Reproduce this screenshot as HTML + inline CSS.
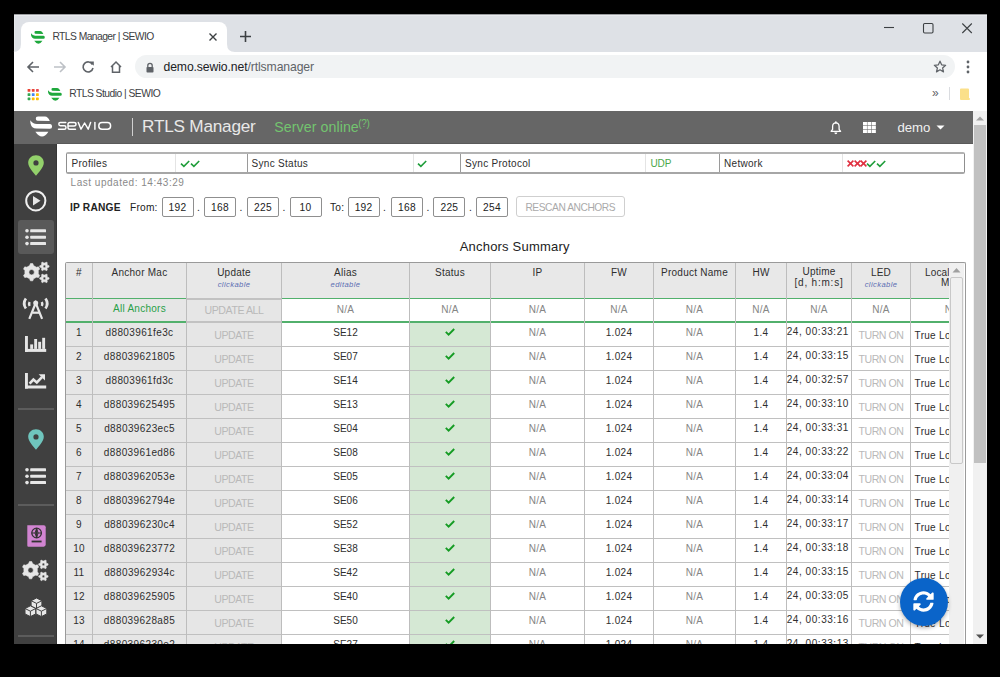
<!DOCTYPE html><html><head><meta charset="utf-8"><style>
html,body{margin:0;padding:0;background:#000;width:1000px;height:677px;overflow:hidden;}
body{position:relative;font-family:'Liberation Sans',sans-serif;}
</style></head><body><div style="position:absolute;left:14px;top:14px;width:973px;height:630px;background:#fff;"></div>
<div style="position:absolute;left:14px;top:14px;width:973px;height:38px;background:#dee1e6;"></div>
<div style="position:absolute;left:14px;top:14px;width:973px;height:1px;background:#9a9c9f;"></div>
<div style="position:absolute;left:14px;top:15px;width:973px;height:1px;background:#e9ebee;"></div>
<div style="position:absolute;left:14px;top:15px;width:1px;height:37px;background:#e6e8eb;"></div>
<div style="position:absolute;left:21px;top:22px;width:206px;height:30px;background:#fff;border-radius:8px 8px 0 0;"></div>
<svg style="position:absolute;left:13px;top:44px" width="8" height="8"><path d="M0 8 Q8 8 8 0 L8 8 Z" fill="#fff"/></svg>
<svg style="position:absolute;left:227px;top:44px" width="8" height="8"><path d="M8 8 Q0 8 0 0 L0 8 Z" fill="#fff"/></svg>
<svg style="position:absolute;left:31px;top:31.2px" width="13.8" height="12.8" viewBox="4.3 4.5 21.8 20" preserveAspectRatio="none"><g fill="#1ea83c"><path d="M9.8 6.7 Q9.6 4.5 12 4.5 L19 4.5 Q22 4.7 23.8 9 L11.5 8.8 Q9.9 8.7 9.8 6.7 Z"/><path d="M4.3 8.2 Q6.5 11.8 11 11.9 L24.2 12.1 Q26.1 12.2 26.1 14.4 Q26.1 16.8 24 16.8 L10.5 16.6 Q5.5 16.3 4.5 11.5 Q4.2 9.5 4.3 8.2 Z"/><path d="M9.4 19.8 L22.4 19.8 Q19.5 24.5 16 24.5 Q12.5 24.5 9.4 19.8 Z"/></g></svg>
<div style="position:absolute;left:52.4px;top:32.04px;font-size:10.3px;line-height:10.3px;color:#3c4043;white-space:nowrap;letter-spacing:-0.55px;">RTLS Manager | SEWIO</div>
<svg style="position:absolute;left:208px;top:32px" width="10" height="10"><path d="M1.5 1.5 L8.5 8.5 M8.5 1.5 L1.5 8.5" stroke="#3c4043" stroke-width="1.4"/></svg>
<svg style="position:absolute;left:239px;top:30px" width="13" height="13"><path d="M6.5 1 L6.5 12 M1 6.5 L12 6.5" stroke="#3c4043" stroke-width="1.6"/></svg>
<svg style="position:absolute;left:880px;top:20px" width="100" height="16"><path d="M4 7.5 L14 7.5" stroke="#3c4043" stroke-width="1.1"/><rect x="43.5" y="3.5" width="9.5" height="9.5" fill="none" stroke="#3c4043" stroke-width="1.1" rx="1.2"/><path d="M82.3 3.5 L91.8 13 M91.8 3.5 L82.3 13" stroke="#3c4043" stroke-width="1.1"/></svg>
<svg style="position:absolute;left:26px;top:60px" width="14" height="14"><path d="M13 7 L2 7 M7 2 L2 7 L7 12" stroke="#5f6368" stroke-width="1.6" fill="none"/></svg>
<svg style="position:absolute;left:53px;top:60px" width="14" height="14"><path d="M1 7 L12 7 M7 2 L12 7 L7 12" stroke="#bdc1c6" stroke-width="1.6" fill="none"/></svg>
<svg style="position:absolute;left:81px;top:60px" width="14" height="14"><path d="M11.5 4.5 A5 5 0 1 0 12 8" stroke="#5f6368" stroke-width="1.6" fill="none"/><path d="M8.5 1.5 L12.8 1.5 L12.8 5.8 Z" fill="#5f6368"/></svg>
<svg style="position:absolute;left:109px;top:60px" width="14" height="14"><path d="M2 7 L7 2 L12 7 M3.5 5.8 L3.5 12.3 L10.5 12.3 L10.5 5.8" stroke="#5f6368" stroke-width="1.5" fill="none"/></svg>
<div style="position:absolute;left:135px;top:55px;width:820px;height:23px;background:#f1f3f4;border-radius:12px;"></div>
<svg style="position:absolute;left:145px;top:62px" width="10" height="11"><path d="M2.8 5 L2.8 3.5 A2.2 2.2 0 0 1 7.2 3.5 L7.2 5" stroke="#5f6368" stroke-width="1.3" fill="none"/><rect x="1.5" y="5" width="7" height="5.5" rx="0.8" fill="#5f6368"/></svg>
<div style="position:absolute;left:163.5px;top:60.83px;font-size:12.2px;line-height:12.2px;color:#202124;white-space:nowrap;letter-spacing:-0.1px;"><span style="color:#202124">demo.sewio.net</span><span style="color:#5f6368">/rtlsmanager</span></div>
<svg style="position:absolute;left:933px;top:60px" width="14" height="13" viewBox="0 0 24 23"><path d="M12 2 L14.9 8.6 L22 9.3 L16.6 14 L18.2 21 L12 17.3 L5.8 21 L7.4 14 L2 9.3 L9.1 8.6 Z" stroke="#5f6368" stroke-width="2.2" fill="none" stroke-linejoin="round"/></svg>
<svg style="position:absolute;left:965px;top:60px" width="6" height="14"><circle cx="3" cy="2" r="1.4" fill="#5f6368"/><circle cx="3" cy="7" r="1.4" fill="#5f6368"/><circle cx="3" cy="12" r="1.4" fill="#5f6368"/></svg>
<svg style="position:absolute;left:27px;top:88px" width="13" height="13"><rect x="0.6" y="1.0" width="2.8" height="2.8" rx="0.6" fill="#ea4335"/><rect x="4.8" y="1.0" width="2.8" height="2.8" rx="0.6" fill="#ea4335"/><rect x="9.0" y="1.0" width="2.8" height="2.8" rx="0.6" fill="#e94c55"/><rect x="0.6" y="5.2" width="2.8" height="2.8" rx="0.6" fill="#34a853"/><rect x="4.8" y="5.2" width="2.8" height="2.8" rx="0.6" fill="#4285f4"/><rect x="9.0" y="5.2" width="2.8" height="2.8" rx="0.6" fill="#fbbc04"/><rect x="0.6" y="9.4" width="2.8" height="2.8" rx="0.6" fill="#34a853"/><rect x="4.8" y="9.4" width="2.8" height="2.8" rx="0.6" fill="#fbbc04"/><rect x="9.0" y="9.4" width="2.8" height="2.8" rx="0.6" fill="#fbbc04"/></svg>
<svg style="position:absolute;left:48.2px;top:88px" width="13.8" height="12.8" viewBox="4.3 4.5 21.8 20" preserveAspectRatio="none"><g fill="#1ea83c"><path d="M9.8 6.7 Q9.6 4.5 12 4.5 L19 4.5 Q22 4.7 23.8 9 L11.5 8.8 Q9.9 8.7 9.8 6.7 Z"/><path d="M4.3 8.2 Q6.5 11.8 11 11.9 L24.2 12.1 Q26.1 12.2 26.1 14.4 Q26.1 16.8 24 16.8 L10.5 16.6 Q5.5 16.3 4.5 11.5 Q4.2 9.5 4.3 8.2 Z"/><path d="M9.4 19.8 L22.4 19.8 Q19.5 24.5 16 24.5 Q12.5 24.5 9.4 19.8 Z"/></g></svg>
<div style="position:absolute;left:69.2px;top:89.25px;font-size:10.3px;line-height:10.3px;color:#3c4043;white-space:nowrap;letter-spacing:-0.52px;">RTLS Studio | SEWIO</div>
<div style="position:absolute;left:932px;top:86.80px;font-size:12px;line-height:12px;color:#5f6368;white-space:nowrap;">»</div>
<div style="position:absolute;left:949px;top:87px;width:1px;height:13px;background:#dadce0;"></div>
<svg style="position:absolute;left:959px;top:88px" width="12" height="13"><path d="M1 1.5 Q1 0.5 2 0.5 L9 0.5 Q10 0.5 10 1.5 L10 10 Q11 10 11 11 Q11 12 10 12 L2 12 Q1 12 1 11 Z" fill="#fbe08a"/></svg>
<div style="position:absolute;left:14px;top:111px;width:959px;height:33px;background:#666;"></div>
<div style="position:absolute;left:57px;top:143px;width:916px;height:1px;background:#5a5a5a;"></div>
<svg style="position:absolute;left:26px;top:112px" width="32" height="28" viewBox="0 0 32 28">
<path d="M9.8 6.7 Q9.6 4.5 12 4.5 L19 4.5 Q22 4.7 23.8 9 L11.5 8.8 Q9.9 8.7 9.8 6.7 Z" fill="#fff"/>
<path d="M4.3 8.2 Q6.5 11.8 11 11.9 L24.2 12.1 Q26.1 12.2 26.1 14.4 Q26.1 16.8 24 16.8 L10.5 16.6 Q5.5 16.3 4.5 11.5 Q4.2 9.5 4.3 8.2 Z" fill="#fff"/>
<path d="M9.4 19.8 L22.4 19.8 Q19.5 24.5 16 24.5 Q12.5 24.5 9.4 19.8 Z" fill="#fff"/>
</svg>
<svg style="position:absolute;left:57px;top:121px" width="55" height="10" viewBox="0 0 55 10">
<g fill="none" stroke="#fff" stroke-width="1.45" stroke-linecap="round" stroke-linejoin="round">
<path d="M8.8 1.5 L3.2 1.5 Q1.8 1.5 1.8 3.1 Q1.8 4.7 3.4 4.7 L7.3 4.7 Q9 4.7 9 6.4 Q9 8.2 7.3 8.2 L1.5 8.2"/>
<path d="M18.5 8.2 L12.8 8.2 Q11 8.2 11 6.4 L11 3.3 Q11 1.5 12.8 1.5 L17 1.5 Q19 1.5 19 3.2 Q19 4.9 17 4.9 L11.3 4.9"/>
<path d="M21.3 1.5 L24 8.2 L27.6 2 L31.2 8.2 L33.6 1.5"/>
<path d="M37.9 1.5 L37.9 8.2"/>
<rect x="41.8" y="1.5" width="11.8" height="6.7" rx="3.2"/>
</g></svg>
<div style="position:absolute;left:131.5px;top:118px;width:1.2px;height:18px;background:#d0d0d0;"></div>
<div style="position:absolute;left:142px;top:117.68px;font-size:17.2px;line-height:17.2px;color:#e8e8e8;white-space:nowrap;letter-spacing:-0.22px;">RTLS Manager</div>
<div style="position:absolute;left:274.2px;top:120.23px;font-size:14.2px;line-height:14.2px;color:#73c46f;white-space:nowrap;letter-spacing:0.08px;">Server online</div>
<div style="position:absolute;left:358.2px;top:118.70px;font-size:10px;line-height:10px;color:#73c46f;white-space:nowrap;letter-spacing:-0.3px;">(?)</div>
<svg style="position:absolute;left:829.5px;top:121px" width="12" height="14" viewBox="0 0 12 14"><path d="M1.1 10.3 L2.6 8.4 L2.6 5.6 Q2.6 2 5.85 1.8 Q9.1 2 9.1 5.6 L9.1 8.4 L10.6 10.3 Z" fill="none" stroke="#fff" stroke-width="1.3" stroke-linejoin="round"/><circle cx="5.85" cy="1.2" r="0.9" fill="#fff"/><path d="M4.3 11.4 L7.4 11.4 Q7.2 13.2 5.85 13.2 Q4.5 13.2 4.3 11.4 Z" fill="#fff"/></svg>
<svg style="position:absolute;left:862.8px;top:121.7px" width="13" height="11.2"><rect x="0.00" y="0.00" width="3.95" height="3.35" fill="#fff"/><rect x="4.45" y="0.00" width="3.95" height="3.35" fill="#fff"/><rect x="8.90" y="0.00" width="3.95" height="3.35" fill="#fff"/><rect x="0.00" y="3.85" width="3.95" height="3.35" fill="#fff"/><rect x="4.45" y="3.85" width="3.95" height="3.35" fill="#fff"/><rect x="8.90" y="3.85" width="3.95" height="3.35" fill="#fff"/><rect x="0.00" y="7.70" width="3.95" height="3.35" fill="#fff"/><rect x="4.45" y="7.70" width="3.95" height="3.35" fill="#fff"/><rect x="8.90" y="7.70" width="3.95" height="3.35" fill="#fff"/></svg>
<div style="position:absolute;left:897.6px;top:120.78px;font-size:13.2px;line-height:13.2px;color:#f0f0f0;white-space:nowrap;letter-spacing:-0.1px;">demo</div>
<svg style="position:absolute;left:936px;top:125px" width="9" height="5"><path d="M0.5 0.5 L8.5 0.5 L4.5 4.5 Z" fill="#fff"/></svg>
<div style="position:absolute;left:973px;top:111px;width:14px;height:533px;background:#f1f1f1;"></div>
<svg style="position:absolute;left:976px;top:116px" width="8" height="5"><path d="M0 4.5 L4 0.5 L8 4.5 Z" fill="#a3a3a3"/></svg>
<div style="position:absolute;left:974px;top:125px;width:12px;height:338px;background:#c1c1c1;"></div>
<svg style="position:absolute;left:976px;top:634px" width="8" height="5"><path d="M0 0.5 L8 0.5 L4 4.5 Z" fill="#505050"/></svg>
<div style="position:absolute;left:14px;top:144px;width:43px;height:500px;background:#404040;"></div>
<div style="position:absolute;left:56px;top:144px;width:1px;height:500px;background:#363636;"></div>
<svg style="position:absolute;left:28px;top:154.5px" width="16" height="21" viewBox="0 0 16 21"><path d="M8 0.2 C3.6 0.2 0.2 3.5 0.2 7.8 C0.2 12.5 5.5 17.5 8 20.8 C10.5 17.5 15.8 12.5 15.8 7.8 C15.8 3.5 12.4 0.2 8 0.2 Z M8 5.3 A2.6 2.6 0 1 0 8 10.5 A2.6 2.6 0 1 0 8 5.3 Z" fill="#93d16b" fill-rule="evenodd"/></svg>
<svg style="position:absolute;left:25px;top:189.5px" width="22" height="22"><circle cx="10.8" cy="10.8" r="9.6" fill="none" stroke="#f0f0f0" stroke-width="2"/><path d="M8 6 L15.5 10.8 L8 15.6 Z" fill="#e6e6e6"/></svg>
<div style="position:absolute;left:17.5px;top:220px;width:36.5px;height:34px;background:#595959;border-radius:3px;"></div>
<svg style="position:absolute;left:25px;top:228.6px" width="22" height="17"><circle cx="2" cy="1.80" r="1.8" fill="#e6e6e6"/><rect x="5.2" y="0.30" width="15.8" height="3" rx="0.6" fill="#e6e6e6"/><circle cx="2" cy="8.20" r="1.8" fill="#e6e6e6"/><rect x="5.2" y="6.70" width="15.8" height="3" rx="0.6" fill="#e6e6e6"/><circle cx="2" cy="14.60" r="1.8" fill="#e6e6e6"/><rect x="5.2" y="13.10" width="15.8" height="3" rx="0.6" fill="#e6e6e6"/></svg>
<svg style="position:absolute;left:22.5px;top:261px" width="28" height="24"><path d="M6.67 4.57 L7.42 2.58 L9.78 2.58 L10.53 4.57 L13.38 6.22 L15.47 5.87 L16.66 7.91 L15.30 9.55 L15.30 12.85 L16.66 14.49 L15.47 16.53 L13.38 16.18 L10.53 17.83 L9.78 19.82 L7.42 19.82 L6.67 17.83 L3.82 16.18 L1.73 16.53 L0.54 14.49 L1.90 12.85 L1.90 9.55 L0.54 7.91 L1.73 5.87 L3.82 6.22 Z M11.30 11.20 A2.7 2.7 0 1 0 5.90 11.20 A2.7 2.7 0 1 0 11.30 11.20 Z M24.75 4.39 L26.05 4.71 L26.05 6.09 L24.75 6.41 L23.95 7.80 L24.32 9.08 L23.13 9.77 L22.20 8.81 L20.60 8.81 L19.67 9.77 L18.48 9.08 L18.85 7.80 L18.05 6.41 L16.75 6.09 L16.75 4.71 L18.05 4.39 L18.85 3.00 L18.48 1.72 L19.67 1.03 L20.60 1.99 L22.20 1.99 L23.13 1.03 L24.32 1.72 L23.95 3.00 Z M22.70 5.40 A1.3 1.3 0 1 0 20.10 5.40 A1.3 1.3 0 1 0 22.70 5.40 Z M24.75 16.39 L26.05 16.71 L26.05 18.09 L24.75 18.41 L23.95 19.80 L24.32 21.08 L23.13 21.77 L22.20 20.81 L20.60 20.81 L19.67 21.77 L18.48 21.08 L18.85 19.80 L18.05 18.41 L16.75 18.09 L16.75 16.71 L18.05 16.39 L18.85 15.00 L18.48 13.72 L19.67 13.03 L20.60 13.99 L22.20 13.99 L23.13 13.03 L24.32 13.72 L23.95 15.00 Z M22.70 17.40 A1.3 1.3 0 1 0 20.10 17.40 A1.3 1.3 0 1 0 22.70 17.40 Z" fill="#e6e6e6" fill-rule="evenodd" stroke="#e6e6e6" stroke-width="0.6" stroke-linejoin="round"/></svg>
<svg style="position:absolute;left:18px;top:294px" width="36" height="30" viewBox="0 0 36 30">
<g fill="none" stroke="#e6e6e6" stroke-linecap="butt">
<path d="M7.9 4.6 Q4.4 9.6 7.9 14.6" stroke-width="2.7"/><path d="M27.5 4.6 Q31 9.6 27.5 14.6" stroke-width="2.7"/>
<path d="M11.6 8 Q10.5 10 11.6 12" stroke-width="2.5"/><path d="M23.8 8 Q24.9 10 23.8 12" stroke-width="2.5"/>
<path d="M11.3 24.8 L17.7 9 L24.1 24.8" stroke-width="2.2"/><path d="M14.3 18.7 L21.1 18.7" stroke-width="2.2"/>
</g><circle cx="17.7" cy="9" r="2.5" fill="#e6e6e6"/></svg>
<svg style="position:absolute;left:25px;top:336px" width="22" height="17">
<rect x="0" y="0" width="2.9" height="16" fill="#e6e6e6"/><rect x="0" y="12.9" width="21.2" height="3" fill="#e6e6e6"/>
<rect x="5.2" y="8.4" width="2.9" height="4.5" fill="#e6e6e6"/><rect x="9.2" y="3" width="2.9" height="9.9" fill="#e6e6e6"/>
<rect x="13.2" y="5.8" width="2.9" height="7.1" fill="#e6e6e6"/><rect x="17.2" y="1.8" width="2.9" height="11.1" fill="#e6e6e6"/>
</svg>
<svg style="position:absolute;left:25px;top:373px" width="22" height="17">
<rect x="0" y="0" width="2.9" height="15.6" fill="#e6e6e6"/><rect x="0" y="12.5" width="21.2" height="3" fill="#e6e6e6"/>
<path d="M4.6 10.6 L8.4 6.6 L11.8 9.4 L17 4.2" fill="none" stroke="#e6e6e6" stroke-width="2.6" stroke-linejoin="miter"/>
<path d="M13.6 1.2 L20 1.2 L20 7.6 Z" fill="#e6e6e6"/>
</svg>
<div style="position:absolute;left:17.5px;top:408px;width:36.5px;height:1.5px;background:#5c5c5c;"></div>
<svg style="position:absolute;left:27.6px;top:429.3px" width="16" height="21" viewBox="0 0 16 21"><path d="M8 0.2 C3.6 0.2 0.2 3.5 0.2 7.8 C0.2 12.5 5.5 17.5 8 20.8 C10.5 17.5 15.8 12.5 15.8 7.8 C15.8 3.5 12.4 0.2 8 0.2 Z M8 5.3 A2.6 2.6 0 1 0 8 10.5 A2.6 2.6 0 1 0 8 5.3 Z" fill="#6fc5bd" fill-rule="evenodd"/></svg>
<svg style="position:absolute;left:25.2px;top:468px" width="22" height="17"><circle cx="2" cy="1.80" r="1.8" fill="#e6e6e6"/><rect x="5.2" y="0.30" width="15.8" height="3" rx="0.6" fill="#e6e6e6"/><circle cx="2" cy="8.20" r="1.8" fill="#e6e6e6"/><rect x="5.2" y="6.70" width="15.8" height="3" rx="0.6" fill="#e6e6e6"/><circle cx="2" cy="14.60" r="1.8" fill="#e6e6e6"/><rect x="5.2" y="13.10" width="15.8" height="3" rx="0.6" fill="#e6e6e6"/></svg>
<div style="position:absolute;left:17.5px;top:504px;width:36.5px;height:1.5px;background:#5c5c5c;"></div>
<svg style="position:absolute;left:26.5px;top:524.5px" width="19" height="22" viewBox="0 0 19 22">
<path d="M0.3 0.3 L16.8 0.3 Q18.7 0.3 18.7 2.2 L18.7 19.6 Q18.7 21.7 16.6 21.7 L1.5 21.7 Q0.3 21.7 0.3 20.5 Z" fill="#d184d1"/>
<circle cx="9.6" cy="8" r="4.8" fill="none" stroke="#333" stroke-width="1.3"/>
<path d="M4.8 8 L14.4 8 M9.6 3.2 L9.6 12.8" fill="none" stroke="#333" stroke-width="1.1"/>
<path d="M9.6 3.2 Q6.6 8 9.6 12.8 Q12.6 8 9.6 3.2" fill="none" stroke="#333" stroke-width="1"/>
<rect x="4.6" y="15.6" width="10" height="1.8" fill="#333"/>
</svg>
<svg style="position:absolute;left:22px;top:559px" width="28" height="24"><path d="M6.67 4.57 L7.42 2.58 L9.78 2.58 L10.53 4.57 L13.38 6.22 L15.47 5.87 L16.66 7.91 L15.30 9.55 L15.30 12.85 L16.66 14.49 L15.47 16.53 L13.38 16.18 L10.53 17.83 L9.78 19.82 L7.42 19.82 L6.67 17.83 L3.82 16.18 L1.73 16.53 L0.54 14.49 L1.90 12.85 L1.90 9.55 L0.54 7.91 L1.73 5.87 L3.82 6.22 Z M11.30 11.20 A2.7 2.7 0 1 0 5.90 11.20 A2.7 2.7 0 1 0 11.30 11.20 Z M24.75 4.39 L26.05 4.71 L26.05 6.09 L24.75 6.41 L23.95 7.80 L24.32 9.08 L23.13 9.77 L22.20 8.81 L20.60 8.81 L19.67 9.77 L18.48 9.08 L18.85 7.80 L18.05 6.41 L16.75 6.09 L16.75 4.71 L18.05 4.39 L18.85 3.00 L18.48 1.72 L19.67 1.03 L20.60 1.99 L22.20 1.99 L23.13 1.03 L24.32 1.72 L23.95 3.00 Z M22.70 5.40 A1.3 1.3 0 1 0 20.10 5.40 A1.3 1.3 0 1 0 22.70 5.40 Z M24.75 16.39 L26.05 16.71 L26.05 18.09 L24.75 18.41 L23.95 19.80 L24.32 21.08 L23.13 21.77 L22.20 20.81 L20.60 20.81 L19.67 21.77 L18.48 21.08 L18.85 19.80 L18.05 18.41 L16.75 18.09 L16.75 16.71 L18.05 16.39 L18.85 15.00 L18.48 13.72 L19.67 13.03 L20.60 13.99 L22.20 13.99 L23.13 13.03 L24.32 13.72 L23.95 15.00 Z M22.70 17.40 A1.3 1.3 0 1 0 20.10 17.40 A1.3 1.3 0 1 0 22.70 17.40 Z" fill="#e6e6e6" fill-rule="evenodd" stroke="#e6e6e6" stroke-width="0.6" stroke-linejoin="round"/></svg>
<svg style="position:absolute;left:24px;top:597px" width="24" height="21" viewBox="0 0 24 21"><path d="M12.5 1.0 L17.9 3.7 L17.9 9.100000000000001 L12.5 11.8 L7.1 9.100000000000001 L7.1 3.7 Z" fill="#e6e6e6" stroke="#404040" stroke-width="1"/><path d="M7.1 3.7 L12.5 6.4 L17.9 3.7 M12.5 6.4 L12.5 11.8" fill="none" stroke="#404040" stroke-width="1"/><path d="M6.4 8.8 L11.8 11.5 L11.8 16.900000000000002 L6.4 19.6 L1.0 16.900000000000002 L1.0 11.5 Z" fill="#e6e6e6" stroke="#404040" stroke-width="1"/><path d="M1.0 11.5 L6.4 14.200000000000001 L11.8 11.5 M6.4 14.200000000000001 L6.4 19.6" fill="none" stroke="#404040" stroke-width="1"/><path d="M17.4 8.8 L22.799999999999997 11.5 L22.799999999999997 16.900000000000002 L17.4 19.6 L11.999999999999998 16.900000000000002 L11.999999999999998 11.5 Z" fill="#e6e6e6" stroke="#404040" stroke-width="1"/><path d="M11.999999999999998 11.5 L17.4 14.200000000000001 L22.799999999999997 11.5 M17.4 14.200000000000001 L17.4 19.6" fill="none" stroke="#404040" stroke-width="1"/></svg>
<div style="position:absolute;left:17.5px;top:635px;width:36.5px;height:1.5px;background:#5c5c5c;"></div>
<div style="position:absolute;left:66px;top:152px;width:897px;height:18px;border:1px solid #8f8f8f;border-top:2px solid #b3b3b3;border-bottom:2px solid #a6a6a6;border-radius:2px;"></div>
<div style="position:absolute;left:175px;top:154px;width:1px;height:18px;background:#e4e4e4;"></div>
<div style="position:absolute;left:413px;top:154px;width:1px;height:18px;background:#e4e4e4;"></div>
<div style="position:absolute;left:645px;top:154px;width:1px;height:18px;background:#e4e4e4;"></div>
<div style="position:absolute;left:842px;top:154px;width:1px;height:18px;background:#e4e4e4;"></div>
<div style="position:absolute;left:247px;top:154px;width:1px;height:18px;background:#9a9a9a;"></div>
<div style="position:absolute;left:460px;top:154px;width:1px;height:18px;background:#9a9a9a;"></div>
<div style="position:absolute;left:719px;top:154px;width:1px;height:18px;background:#9a9a9a;"></div>
<div style="position:absolute;left:71.5px;top:158.90px;font-size:10px;line-height:10px;color:#2e2e2e;white-space:nowrap;letter-spacing:0.3px;">Profiles</div>
<div style="position:absolute;left:251.5px;top:158.90px;font-size:10px;line-height:10px;color:#2e2e2e;white-space:nowrap;letter-spacing:0.3px;">Sync Status</div>
<div style="position:absolute;left:465px;top:158.90px;font-size:10px;line-height:10px;color:#2e2e2e;white-space:nowrap;letter-spacing:0.3px;">Sync Protocol</div>
<div style="position:absolute;left:724px;top:158.90px;font-size:10px;line-height:10px;color:#2e2e2e;white-space:nowrap;letter-spacing:0.3px;">Network</div>
<div style="position:absolute;left:650.4px;top:158.90px;font-size:10px;line-height:10px;color:#4aa84a;white-space:nowrap;letter-spacing:0px;">UDP</div>
<svg style="position:absolute;left:180px;top:159.5px" width="10" height="8" viewBox="0 0 10 8"><path d="M1 3.6 L3.9 6.3 L9.2 1" fill="none" stroke="#1f9d3a" stroke-width="1.6"/></svg>
<svg style="position:absolute;left:189.5px;top:159.5px" width="10" height="8" viewBox="0 0 10 8"><path d="M1 3.6 L3.9 6.3 L9.2 1" fill="none" stroke="#1f9d3a" stroke-width="1.6"/></svg>
<svg style="position:absolute;left:417px;top:159.5px" width="10" height="8" viewBox="0 0 10 8"><path d="M1 3.6 L3.9 6.3 L9.2 1" fill="none" stroke="#1f9d3a" stroke-width="1.6"/></svg>
<svg style="position:absolute;left:847px;top:160px" width="7" height="7"><path d="M0.6 0.6 L6.4 6.4 M6.4 0.6 L0.6 6.4" stroke="#e03040" stroke-width="1.6"/></svg>
<svg style="position:absolute;left:853.5px;top:160px" width="7" height="7"><path d="M0.6 0.6 L6.4 6.4 M6.4 0.6 L0.6 6.4" stroke="#e03040" stroke-width="1.6"/></svg>
<svg style="position:absolute;left:860px;top:160px" width="7" height="7"><path d="M0.6 0.6 L6.4 6.4 M6.4 0.6 L0.6 6.4" stroke="#e03040" stroke-width="1.6"/></svg>
<svg style="position:absolute;left:866px;top:159.5px" width="10" height="8" viewBox="0 0 10 8"><path d="M1 3.6 L3.9 6.3 L9.2 1" fill="none" stroke="#1f9d3a" stroke-width="1.6"/></svg>
<svg style="position:absolute;left:875.5px;top:159.5px" width="10" height="8" viewBox="0 0 10 8"><path d="M1 3.6 L3.9 6.3 L9.2 1" fill="none" stroke="#1f9d3a" stroke-width="1.6"/></svg>
<div style="position:absolute;left:70.6px;top:178.10px;font-size:10px;line-height:10px;color:#8a8a8a;white-space:nowrap;letter-spacing:0.52px;">Last updated: 14:43:29</div>
<div style="position:absolute;left:70px;top:203.33px;font-size:10.2px;line-height:10.2px;color:#222;white-space:nowrap;font-weight:bold;letter-spacing:0.2px;">IP RANGE</div>
<div style="position:absolute;left:130px;top:203.33px;font-size:10.2px;line-height:10.2px;color:#222;white-space:nowrap;letter-spacing:0.2px;">From:</div>
<div style="position:absolute;left:330px;top:203.33px;font-size:10.2px;line-height:10.2px;color:#222;white-space:nowrap;letter-spacing:0.2px;">To:</div>
<div style="position:absolute;left:161.5px;top:197px;width:30px;height:18px;border:1px solid #8f8f8f;border-radius:2px;"></div>
<div style="position:absolute;left:161.50px;top:203.33px;width:32px;text-align:center;font-size:10.2px;line-height:10.2px;color:#222;white-space:nowrap;letter-spacing:0.3px;">192</div>
<div style="position:absolute;left:197.0px;top:203.33px;font-size:10.2px;line-height:10.2px;color:#222;white-space:nowrap;">.</div>
<div style="position:absolute;left:204px;top:197px;width:30px;height:18px;border:1px solid #8f8f8f;border-radius:2px;"></div>
<div style="position:absolute;left:204.00px;top:203.33px;width:32px;text-align:center;font-size:10.2px;line-height:10.2px;color:#222;white-space:nowrap;letter-spacing:0.3px;">168</div>
<div style="position:absolute;left:239.5px;top:203.33px;font-size:10.2px;line-height:10.2px;color:#222;white-space:nowrap;">.</div>
<div style="position:absolute;left:247px;top:197px;width:30px;height:18px;border:1px solid #8f8f8f;border-radius:2px;"></div>
<div style="position:absolute;left:247.00px;top:203.33px;width:32px;text-align:center;font-size:10.2px;line-height:10.2px;color:#222;white-space:nowrap;letter-spacing:0.3px;">225</div>
<div style="position:absolute;left:282.5px;top:203.33px;font-size:10.2px;line-height:10.2px;color:#222;white-space:nowrap;">.</div>
<div style="position:absolute;left:289.5px;top:197px;width:30px;height:18px;border:1px solid #8f8f8f;border-radius:2px;"></div>
<div style="position:absolute;left:289.50px;top:203.33px;width:32px;text-align:center;font-size:10.2px;line-height:10.2px;color:#222;white-space:nowrap;letter-spacing:0.3px;">10</div>
<div style="position:absolute;left:347.6px;top:197px;width:30px;height:18px;border:1px solid #8f8f8f;border-radius:2px;"></div>
<div style="position:absolute;left:347.60px;top:203.33px;width:32px;text-align:center;font-size:10.2px;line-height:10.2px;color:#222;white-space:nowrap;letter-spacing:0.3px;">192</div>
<div style="position:absolute;left:383.1px;top:203.33px;font-size:10.2px;line-height:10.2px;color:#222;white-space:nowrap;">.</div>
<div style="position:absolute;left:391px;top:197px;width:30px;height:18px;border:1px solid #8f8f8f;border-radius:2px;"></div>
<div style="position:absolute;left:391.00px;top:203.33px;width:32px;text-align:center;font-size:10.2px;line-height:10.2px;color:#222;white-space:nowrap;letter-spacing:0.3px;">168</div>
<div style="position:absolute;left:426.5px;top:203.33px;font-size:10.2px;line-height:10.2px;color:#222;white-space:nowrap;">.</div>
<div style="position:absolute;left:433.4px;top:197px;width:30px;height:18px;border:1px solid #8f8f8f;border-radius:2px;"></div>
<div style="position:absolute;left:433.40px;top:203.33px;width:32px;text-align:center;font-size:10.2px;line-height:10.2px;color:#222;white-space:nowrap;letter-spacing:0.3px;">225</div>
<div style="position:absolute;left:468.9px;top:203.33px;font-size:10.2px;line-height:10.2px;color:#222;white-space:nowrap;">.</div>
<div style="position:absolute;left:476px;top:197px;width:30px;height:18px;border:1px solid #8f8f8f;border-radius:2px;"></div>
<div style="position:absolute;left:476.00px;top:203.33px;width:32px;text-align:center;font-size:10.2px;line-height:10.2px;color:#222;white-space:nowrap;letter-spacing:0.3px;">254</div>
<div style="position:absolute;left:516px;top:196px;width:107px;height:19px;border:1px solid #cfcfcf;border-radius:3px;"></div>
<div style="position:absolute;left:515.30px;top:202.83px;width:110px;text-align:center;font-size:10.2px;line-height:10.2px;color:#aaa;white-space:nowrap;letter-spacing:-0.42px;">RESCAN ANCHORS</div>
<div style="position:absolute;left:449.70px;top:239.75px;width:130px;text-align:center;font-size:13px;line-height:13px;color:#222;white-space:nowrap;letter-spacing:0.2px;">Anchors Summary</div>
<div style="position:absolute;left:65px;top:262px;width:899px;height:381px;border:1px solid #9a9a9a;border-bottom:none;border-radius:2px 2px 0 0;"></div>
<div style="position:absolute;left:66px;top:263px;width:883px;height:381px;overflow:hidden;">
<div style="position:absolute;left:0px;top:0px;width:883px;height:35px;background:#e8e8e8;"></div>
<div style="position:absolute;left:0px;top:36px;width:883px;height:22px;background:#fff;"></div>
<div style="position:absolute;left:0px;top:36px;width:215px;height:22px;background:#e6e6e6;"></div>
<div style="position:absolute;left:0px;top:59px;width:215px;height:24px;background:#e6e6e6;"></div>
<div style="position:absolute;left:344px;top:60px;width:80px;height:24px;background:#d5e8d4;"></div>
<div style="position:absolute;left:0px;top:83px;width:215px;height:24px;background:#e6e6e6;"></div>
<div style="position:absolute;left:344px;top:84px;width:80px;height:24px;background:#d5e8d4;"></div>
<div style="position:absolute;left:0px;top:107px;width:215px;height:24px;background:#e6e6e6;"></div>
<div style="position:absolute;left:344px;top:108px;width:80px;height:24px;background:#d5e8d4;"></div>
<div style="position:absolute;left:0px;top:131px;width:215px;height:24px;background:#e6e6e6;"></div>
<div style="position:absolute;left:344px;top:132px;width:80px;height:24px;background:#d5e8d4;"></div>
<div style="position:absolute;left:0px;top:155px;width:215px;height:24px;background:#e6e6e6;"></div>
<div style="position:absolute;left:344px;top:156px;width:80px;height:24px;background:#d5e8d4;"></div>
<div style="position:absolute;left:0px;top:179px;width:215px;height:24px;background:#e6e6e6;"></div>
<div style="position:absolute;left:344px;top:180px;width:80px;height:24px;background:#d5e8d4;"></div>
<div style="position:absolute;left:0px;top:203px;width:215px;height:24px;background:#e6e6e6;"></div>
<div style="position:absolute;left:344px;top:204px;width:80px;height:24px;background:#d5e8d4;"></div>
<div style="position:absolute;left:0px;top:227px;width:215px;height:24px;background:#e6e6e6;"></div>
<div style="position:absolute;left:344px;top:228px;width:80px;height:24px;background:#d5e8d4;"></div>
<div style="position:absolute;left:0px;top:251px;width:215px;height:24px;background:#e6e6e6;"></div>
<div style="position:absolute;left:344px;top:252px;width:80px;height:24px;background:#d5e8d4;"></div>
<div style="position:absolute;left:0px;top:275px;width:215px;height:24px;background:#e6e6e6;"></div>
<div style="position:absolute;left:344px;top:276px;width:80px;height:24px;background:#d5e8d4;"></div>
<div style="position:absolute;left:0px;top:299px;width:215px;height:24px;background:#e6e6e6;"></div>
<div style="position:absolute;left:344px;top:300px;width:80px;height:24px;background:#d5e8d4;"></div>
<div style="position:absolute;left:0px;top:323px;width:215px;height:24px;background:#e6e6e6;"></div>
<div style="position:absolute;left:344px;top:324px;width:80px;height:24px;background:#d5e8d4;"></div>
<div style="position:absolute;left:0px;top:347px;width:215px;height:24px;background:#e6e6e6;"></div>
<div style="position:absolute;left:344px;top:348px;width:80px;height:24px;background:#d5e8d4;"></div>
<div style="position:absolute;left:0px;top:371px;width:215px;height:24px;background:#e6e6e6;"></div>
<div style="position:absolute;left:344px;top:372px;width:80px;height:24px;background:#d5e8d4;"></div>
<div style="position:absolute;left:0px;top:83px;width:883px;height:1px;background:#c0c0c0;"></div>
<div style="position:absolute;left:121px;top:82.5px;width:94px;height:1.6px;background:#c0c0c0;"></div>
<div style="position:absolute;left:0px;top:107px;width:883px;height:1px;background:#c0c0c0;"></div>
<div style="position:absolute;left:121px;top:106.5px;width:94px;height:1.6px;background:#c0c0c0;"></div>
<div style="position:absolute;left:0px;top:131px;width:883px;height:1px;background:#c0c0c0;"></div>
<div style="position:absolute;left:121px;top:130.5px;width:94px;height:1.6px;background:#c0c0c0;"></div>
<div style="position:absolute;left:0px;top:155px;width:883px;height:1px;background:#c0c0c0;"></div>
<div style="position:absolute;left:121px;top:154.5px;width:94px;height:1.6px;background:#c0c0c0;"></div>
<div style="position:absolute;left:0px;top:179px;width:883px;height:1px;background:#c0c0c0;"></div>
<div style="position:absolute;left:121px;top:178.5px;width:94px;height:1.6px;background:#c0c0c0;"></div>
<div style="position:absolute;left:0px;top:203px;width:883px;height:1px;background:#c0c0c0;"></div>
<div style="position:absolute;left:121px;top:202.5px;width:94px;height:1.6px;background:#c0c0c0;"></div>
<div style="position:absolute;left:0px;top:227px;width:883px;height:1px;background:#c0c0c0;"></div>
<div style="position:absolute;left:121px;top:226.5px;width:94px;height:1.6px;background:#c0c0c0;"></div>
<div style="position:absolute;left:0px;top:251px;width:883px;height:1px;background:#c0c0c0;"></div>
<div style="position:absolute;left:121px;top:250.5px;width:94px;height:1.6px;background:#c0c0c0;"></div>
<div style="position:absolute;left:0px;top:275px;width:883px;height:1px;background:#c0c0c0;"></div>
<div style="position:absolute;left:121px;top:274.5px;width:94px;height:1.6px;background:#c0c0c0;"></div>
<div style="position:absolute;left:0px;top:299px;width:883px;height:1px;background:#c0c0c0;"></div>
<div style="position:absolute;left:121px;top:298.5px;width:94px;height:1.6px;background:#c0c0c0;"></div>
<div style="position:absolute;left:0px;top:323px;width:883px;height:1px;background:#c0c0c0;"></div>
<div style="position:absolute;left:121px;top:322.5px;width:94px;height:1.6px;background:#c0c0c0;"></div>
<div style="position:absolute;left:0px;top:347px;width:883px;height:1px;background:#c0c0c0;"></div>
<div style="position:absolute;left:121px;top:346.5px;width:94px;height:1.6px;background:#c0c0c0;"></div>
<div style="position:absolute;left:0px;top:371px;width:883px;height:1px;background:#c0c0c0;"></div>
<div style="position:absolute;left:121px;top:370.5px;width:94px;height:1.6px;background:#c0c0c0;"></div>
<div style="position:absolute;left:0px;top:395px;width:883px;height:1px;background:#c0c0c0;"></div>
<div style="position:absolute;left:121px;top:394.5px;width:94px;height:1.6px;background:#c0c0c0;"></div>
<div style="position:absolute;left:0px;top:35px;width:883px;height:1.3px;background:#52b06c;"></div>
<div style="position:absolute;left:0px;top:58px;width:883px;height:1.6px;background:#52b06c;"></div>
<div style="position:absolute;left:121px;top:35px;width:94px;height:2px;background:#c2c2c2;"></div>
<div style="position:absolute;left:121px;top:57.5px;width:94px;height:2px;background:#c2c2c2;"></div>
<div style="position:absolute;left:26px;top:0px;width:1px;height:381px;background:#bdbdbd;"></div>
<div style="position:absolute;left:120px;top:0px;width:1px;height:381px;background:#bdbdbd;"></div>
<div style="position:absolute;left:215px;top:0px;width:1px;height:381px;background:#bdbdbd;"></div>
<div style="position:absolute;left:343px;top:0px;width:1px;height:381px;background:#bdbdbd;"></div>
<div style="position:absolute;left:424px;top:0px;width:1px;height:381px;background:#bdbdbd;"></div>
<div style="position:absolute;left:518px;top:0px;width:1px;height:381px;background:#bdbdbd;"></div>
<div style="position:absolute;left:587px;top:0px;width:1px;height:381px;background:#bdbdbd;"></div>
<div style="position:absolute;left:669px;top:0px;width:1px;height:381px;background:#bdbdbd;"></div>
<div style="position:absolute;left:720px;top:0px;width:1px;height:381px;background:#bdbdbd;"></div>
<div style="position:absolute;left:785px;top:0px;width:1px;height:381px;background:#bdbdbd;"></div>
<div style="position:absolute;left:844px;top:0px;width:1px;height:381px;background:#bdbdbd;"></div>
<div style="position:absolute;left:-32.00px;top:4.80px;width:90px;text-align:center;font-size:10px;line-height:10px;color:#2e2e2e;white-space:nowrap;letter-spacing:0.25px;">#</div>
<div style="position:absolute;left:28.50px;top:4.80px;width:90px;text-align:center;font-size:10px;line-height:10px;color:#2e2e2e;white-space:nowrap;letter-spacing:0.25px;">Anchor Mac</div>
<div style="position:absolute;left:123.00px;top:4.80px;width:90px;text-align:center;font-size:10px;line-height:10px;color:#2e2e2e;white-space:nowrap;letter-spacing:0.25px;">Update</div>
<div style="position:absolute;left:234.50px;top:4.80px;width:90px;text-align:center;font-size:10px;line-height:10px;color:#2e2e2e;white-space:nowrap;letter-spacing:0.25px;">Alias</div>
<div style="position:absolute;left:339.00px;top:4.80px;width:90px;text-align:center;font-size:10px;line-height:10px;color:#2e2e2e;white-space:nowrap;letter-spacing:0.25px;">Status</div>
<div style="position:absolute;left:426.50px;top:4.80px;width:90px;text-align:center;font-size:10px;line-height:10px;color:#2e2e2e;white-space:nowrap;letter-spacing:0.25px;">IP</div>
<div style="position:absolute;left:508.00px;top:4.80px;width:90px;text-align:center;font-size:10px;line-height:10px;color:#2e2e2e;white-space:nowrap;letter-spacing:0.25px;">FW</div>
<div style="position:absolute;left:583.50px;top:4.80px;width:90px;text-align:center;font-size:10px;line-height:10px;color:#2e2e2e;white-space:nowrap;letter-spacing:0.25px;">Product Name</div>
<div style="position:absolute;left:650.00px;top:4.80px;width:90px;text-align:center;font-size:10px;line-height:10px;color:#2e2e2e;white-space:nowrap;letter-spacing:0.25px;">HW</div>
<div style="position:absolute;left:708.00px;top:4.10px;width:90px;text-align:center;font-size:10px;line-height:10px;color:#2e2e2e;white-space:nowrap;letter-spacing:0.25px;">Uptime</div>
<div style="position:absolute;left:770.00px;top:4.80px;width:90px;text-align:center;font-size:10px;line-height:10px;color:#2e2e2e;white-space:nowrap;letter-spacing:0.25px;">LED</div>
<div style="position:absolute;left:123.00px;top:18.14px;width:90px;text-align:center;font-size:7.6px;line-height:7.6px;color:#5b6db3;white-space:nowrap;font-style:italic;letter-spacing:0.4px;">clickable</div>
<div style="position:absolute;left:234.50px;top:18.14px;width:90px;text-align:center;font-size:7.6px;line-height:7.6px;color:#5b6db3;white-space:nowrap;font-style:italic;letter-spacing:0.4px;">editable</div>
<div style="position:absolute;left:770.00px;top:18.14px;width:90px;text-align:center;font-size:7.6px;line-height:7.6px;color:#5b6db3;white-space:nowrap;font-style:italic;letter-spacing:0.4px;">clickable</div>
<div style="position:absolute;left:708.00px;top:15.30px;width:90px;text-align:center;font-size:10px;line-height:10px;color:#2e2e2e;white-space:nowrap;letter-spacing:0.8px;">[d, h:m:s]</div>
<div style="position:absolute;left:823.50px;top:4.80px;width:60px;text-align:right;font-size:10px;line-height:10px;color:#2e2e2e;white-space:nowrap;letter-spacing:0.1px;">Local</div>
<div style="position:absolute;left:875px;top:15.30px;font-size:10px;line-height:10px;color:#2e2e2e;white-space:nowrap;letter-spacing:0.25px;">M</div>
<div style="position:absolute;left:28.50px;top:41.00px;width:90px;text-align:center;font-size:10px;line-height:10px;color:#28a048;white-space:nowrap;letter-spacing:0.25px;">All Anchors</div>
<div style="position:absolute;left:123.00px;top:42.39px;width:90px;text-align:center;font-size:10.6px;line-height:10.6px;color:#b9b9b9;white-space:nowrap;letter-spacing:-0.45px;">UPDATE ALL</div>
<div style="position:absolute;left:234.50px;top:41.70px;width:90px;text-align:center;font-size:10px;line-height:10px;color:#858585;white-space:nowrap;letter-spacing:0.3px;">N/A</div>
<div style="position:absolute;left:339.00px;top:41.70px;width:90px;text-align:center;font-size:10px;line-height:10px;color:#858585;white-space:nowrap;letter-spacing:0.3px;">N/A</div>
<div style="position:absolute;left:426.50px;top:41.70px;width:90px;text-align:center;font-size:10px;line-height:10px;color:#858585;white-space:nowrap;letter-spacing:0.3px;">N/A</div>
<div style="position:absolute;left:508.00px;top:41.70px;width:90px;text-align:center;font-size:10px;line-height:10px;color:#858585;white-space:nowrap;letter-spacing:0.3px;">N/A</div>
<div style="position:absolute;left:583.50px;top:41.70px;width:90px;text-align:center;font-size:10px;line-height:10px;color:#858585;white-space:nowrap;letter-spacing:0.3px;">N/A</div>
<div style="position:absolute;left:650.00px;top:41.70px;width:90px;text-align:center;font-size:10px;line-height:10px;color:#858585;white-space:nowrap;letter-spacing:0.3px;">N/A</div>
<div style="position:absolute;left:708.00px;top:41.70px;width:90px;text-align:center;font-size:10px;line-height:10px;color:#858585;white-space:nowrap;letter-spacing:0.3px;">N/A</div>
<div style="position:absolute;left:770.00px;top:41.70px;width:90px;text-align:center;font-size:10px;line-height:10px;color:#858585;white-space:nowrap;letter-spacing:0.3px;">N/A</div>
<div style="position:absolute;left:878.8px;top:41.70px;font-size:10px;line-height:10px;color:#858585;white-space:nowrap;">N</div>
<div style="position:absolute;left:-2.00px;top:64.50px;width:30px;text-align:center;font-size:10px;line-height:10px;color:#2e2e2e;white-space:nowrap;letter-spacing:0.25px;">1</div>
<div style="position:absolute;left:26.50px;top:64.50px;width:94px;text-align:center;font-size:10px;line-height:10px;color:#2e2e2e;white-space:nowrap;letter-spacing:0.38px;">d8803961fe3c</div>
<div style="position:absolute;left:121.00px;top:67.19px;width:94px;text-align:center;font-size:10.6px;line-height:10.6px;color:#b9b9b9;white-space:nowrap;letter-spacing:-0.45px;">UPDATE</div>
<div style="position:absolute;left:232.50px;top:64.50px;width:94px;text-align:center;font-size:10px;line-height:10px;color:#2e2e2e;white-space:nowrap;letter-spacing:0.05px;">SE12</div>
<svg style="position:absolute;left:379px;top:64.60000000000002px" width="10" height="8" viewBox="0 0 10 8"><path d="M0.8 3.8 L3.6 6.6 L9.2 1" fill="none" stroke="#169c24" stroke-width="1.9"/></svg>
<div style="position:absolute;left:426.50px;top:64.50px;width:90px;text-align:center;font-size:10px;line-height:10px;color:#858585;white-space:nowrap;letter-spacing:0.3px;">N/A</div>
<div style="position:absolute;left:508.00px;top:64.50px;width:90px;text-align:center;font-size:10px;line-height:10px;color:#2e2e2e;white-space:nowrap;letter-spacing:0.3px;">1.024</div>
<div style="position:absolute;left:583.50px;top:64.50px;width:90px;text-align:center;font-size:10px;line-height:10px;color:#858585;white-space:nowrap;letter-spacing:0.3px;">N/A</div>
<div style="position:absolute;left:650.00px;top:64.50px;width:90px;text-align:center;font-size:10px;line-height:10px;color:#2e2e2e;white-space:nowrap;letter-spacing:0.3px;">1.4</div>
<div style="position:absolute;left:721px;top:59px;width:64px;height:24px;overflow:hidden;">
<div style="position:absolute;left:-0.3px;top:5.00px;font-size:10px;line-height:10px;color:#2e2e2e;white-space:nowrap;letter-spacing:0.55px;">24, 00:33:21</div>
</div>
<div style="position:absolute;left:770.00px;top:66.99px;width:90px;text-align:center;font-size:10.6px;line-height:10.6px;color:#b9b9b9;white-space:nowrap;letter-spacing:-0.45px;">TURN ON</div>
<div style="position:absolute;left:848.6px;top:67.50px;font-size:10px;line-height:10px;color:#2e2e2e;white-space:nowrap;letter-spacing:0.3px;">True Lo</div>
<div style="position:absolute;left:-2.00px;top:88.50px;width:30px;text-align:center;font-size:10px;line-height:10px;color:#2e2e2e;white-space:nowrap;letter-spacing:0.25px;">2</div>
<div style="position:absolute;left:26.50px;top:88.50px;width:94px;text-align:center;font-size:10px;line-height:10px;color:#2e2e2e;white-space:nowrap;letter-spacing:0.38px;">d88039621805</div>
<div style="position:absolute;left:121.00px;top:91.19px;width:94px;text-align:center;font-size:10.6px;line-height:10.6px;color:#b9b9b9;white-space:nowrap;letter-spacing:-0.45px;">UPDATE</div>
<div style="position:absolute;left:232.50px;top:88.50px;width:94px;text-align:center;font-size:10px;line-height:10px;color:#2e2e2e;white-space:nowrap;letter-spacing:0.05px;">SE07</div>
<svg style="position:absolute;left:379px;top:88.60000000000002px" width="10" height="8" viewBox="0 0 10 8"><path d="M0.8 3.8 L3.6 6.6 L9.2 1" fill="none" stroke="#169c24" stroke-width="1.9"/></svg>
<div style="position:absolute;left:426.50px;top:88.50px;width:90px;text-align:center;font-size:10px;line-height:10px;color:#858585;white-space:nowrap;letter-spacing:0.3px;">N/A</div>
<div style="position:absolute;left:508.00px;top:88.50px;width:90px;text-align:center;font-size:10px;line-height:10px;color:#2e2e2e;white-space:nowrap;letter-spacing:0.3px;">1.024</div>
<div style="position:absolute;left:583.50px;top:88.50px;width:90px;text-align:center;font-size:10px;line-height:10px;color:#858585;white-space:nowrap;letter-spacing:0.3px;">N/A</div>
<div style="position:absolute;left:650.00px;top:88.50px;width:90px;text-align:center;font-size:10px;line-height:10px;color:#2e2e2e;white-space:nowrap;letter-spacing:0.3px;">1.4</div>
<div style="position:absolute;left:721px;top:83px;width:64px;height:24px;overflow:hidden;">
<div style="position:absolute;left:-0.3px;top:5.00px;font-size:10px;line-height:10px;color:#2e2e2e;white-space:nowrap;letter-spacing:0.55px;">24, 00:33:15</div>
</div>
<div style="position:absolute;left:770.00px;top:90.99px;width:90px;text-align:center;font-size:10.6px;line-height:10.6px;color:#b9b9b9;white-space:nowrap;letter-spacing:-0.45px;">TURN ON</div>
<div style="position:absolute;left:848.6px;top:91.50px;font-size:10px;line-height:10px;color:#2e2e2e;white-space:nowrap;letter-spacing:0.3px;">True Lo</div>
<div style="position:absolute;left:-2.00px;top:112.50px;width:30px;text-align:center;font-size:10px;line-height:10px;color:#2e2e2e;white-space:nowrap;letter-spacing:0.25px;">3</div>
<div style="position:absolute;left:26.50px;top:112.50px;width:94px;text-align:center;font-size:10px;line-height:10px;color:#2e2e2e;white-space:nowrap;letter-spacing:0.38px;">d8803961fd3c</div>
<div style="position:absolute;left:121.00px;top:115.19px;width:94px;text-align:center;font-size:10.6px;line-height:10.6px;color:#b9b9b9;white-space:nowrap;letter-spacing:-0.45px;">UPDATE</div>
<div style="position:absolute;left:232.50px;top:112.50px;width:94px;text-align:center;font-size:10px;line-height:10px;color:#2e2e2e;white-space:nowrap;letter-spacing:0.05px;">SE14</div>
<svg style="position:absolute;left:379px;top:112.60000000000002px" width="10" height="8" viewBox="0 0 10 8"><path d="M0.8 3.8 L3.6 6.6 L9.2 1" fill="none" stroke="#169c24" stroke-width="1.9"/></svg>
<div style="position:absolute;left:426.50px;top:112.50px;width:90px;text-align:center;font-size:10px;line-height:10px;color:#858585;white-space:nowrap;letter-spacing:0.3px;">N/A</div>
<div style="position:absolute;left:508.00px;top:112.50px;width:90px;text-align:center;font-size:10px;line-height:10px;color:#2e2e2e;white-space:nowrap;letter-spacing:0.3px;">1.024</div>
<div style="position:absolute;left:583.50px;top:112.50px;width:90px;text-align:center;font-size:10px;line-height:10px;color:#858585;white-space:nowrap;letter-spacing:0.3px;">N/A</div>
<div style="position:absolute;left:650.00px;top:112.50px;width:90px;text-align:center;font-size:10px;line-height:10px;color:#2e2e2e;white-space:nowrap;letter-spacing:0.3px;">1.4</div>
<div style="position:absolute;left:721px;top:107px;width:64px;height:24px;overflow:hidden;">
<div style="position:absolute;left:-0.3px;top:5.00px;font-size:10px;line-height:10px;color:#2e2e2e;white-space:nowrap;letter-spacing:0.55px;">24, 00:32:57</div>
</div>
<div style="position:absolute;left:770.00px;top:114.99px;width:90px;text-align:center;font-size:10.6px;line-height:10.6px;color:#b9b9b9;white-space:nowrap;letter-spacing:-0.45px;">TURN ON</div>
<div style="position:absolute;left:848.6px;top:115.50px;font-size:10px;line-height:10px;color:#2e2e2e;white-space:nowrap;letter-spacing:0.3px;">True Lo</div>
<div style="position:absolute;left:-2.00px;top:136.50px;width:30px;text-align:center;font-size:10px;line-height:10px;color:#2e2e2e;white-space:nowrap;letter-spacing:0.25px;">4</div>
<div style="position:absolute;left:26.50px;top:136.50px;width:94px;text-align:center;font-size:10px;line-height:10px;color:#2e2e2e;white-space:nowrap;letter-spacing:0.38px;">d88039625495</div>
<div style="position:absolute;left:121.00px;top:139.19px;width:94px;text-align:center;font-size:10.6px;line-height:10.6px;color:#b9b9b9;white-space:nowrap;letter-spacing:-0.45px;">UPDATE</div>
<div style="position:absolute;left:232.50px;top:136.50px;width:94px;text-align:center;font-size:10px;line-height:10px;color:#2e2e2e;white-space:nowrap;letter-spacing:0.05px;">SE13</div>
<svg style="position:absolute;left:379px;top:136.60000000000002px" width="10" height="8" viewBox="0 0 10 8"><path d="M0.8 3.8 L3.6 6.6 L9.2 1" fill="none" stroke="#169c24" stroke-width="1.9"/></svg>
<div style="position:absolute;left:426.50px;top:136.50px;width:90px;text-align:center;font-size:10px;line-height:10px;color:#858585;white-space:nowrap;letter-spacing:0.3px;">N/A</div>
<div style="position:absolute;left:508.00px;top:136.50px;width:90px;text-align:center;font-size:10px;line-height:10px;color:#2e2e2e;white-space:nowrap;letter-spacing:0.3px;">1.024</div>
<div style="position:absolute;left:583.50px;top:136.50px;width:90px;text-align:center;font-size:10px;line-height:10px;color:#858585;white-space:nowrap;letter-spacing:0.3px;">N/A</div>
<div style="position:absolute;left:650.00px;top:136.50px;width:90px;text-align:center;font-size:10px;line-height:10px;color:#2e2e2e;white-space:nowrap;letter-spacing:0.3px;">1.4</div>
<div style="position:absolute;left:721px;top:131px;width:64px;height:24px;overflow:hidden;">
<div style="position:absolute;left:-0.3px;top:5.00px;font-size:10px;line-height:10px;color:#2e2e2e;white-space:nowrap;letter-spacing:0.55px;">24, 00:33:10</div>
</div>
<div style="position:absolute;left:770.00px;top:138.99px;width:90px;text-align:center;font-size:10.6px;line-height:10.6px;color:#b9b9b9;white-space:nowrap;letter-spacing:-0.45px;">TURN ON</div>
<div style="position:absolute;left:848.6px;top:139.50px;font-size:10px;line-height:10px;color:#2e2e2e;white-space:nowrap;letter-spacing:0.3px;">True Lo</div>
<div style="position:absolute;left:-2.00px;top:160.50px;width:30px;text-align:center;font-size:10px;line-height:10px;color:#2e2e2e;white-space:nowrap;letter-spacing:0.25px;">5</div>
<div style="position:absolute;left:26.50px;top:160.50px;width:94px;text-align:center;font-size:10px;line-height:10px;color:#2e2e2e;white-space:nowrap;letter-spacing:0.38px;">d88039623ec5</div>
<div style="position:absolute;left:121.00px;top:163.19px;width:94px;text-align:center;font-size:10.6px;line-height:10.6px;color:#b9b9b9;white-space:nowrap;letter-spacing:-0.45px;">UPDATE</div>
<div style="position:absolute;left:232.50px;top:160.50px;width:94px;text-align:center;font-size:10px;line-height:10px;color:#2e2e2e;white-space:nowrap;letter-spacing:0.05px;">SE04</div>
<svg style="position:absolute;left:379px;top:160.60000000000002px" width="10" height="8" viewBox="0 0 10 8"><path d="M0.8 3.8 L3.6 6.6 L9.2 1" fill="none" stroke="#169c24" stroke-width="1.9"/></svg>
<div style="position:absolute;left:426.50px;top:160.50px;width:90px;text-align:center;font-size:10px;line-height:10px;color:#858585;white-space:nowrap;letter-spacing:0.3px;">N/A</div>
<div style="position:absolute;left:508.00px;top:160.50px;width:90px;text-align:center;font-size:10px;line-height:10px;color:#2e2e2e;white-space:nowrap;letter-spacing:0.3px;">1.024</div>
<div style="position:absolute;left:583.50px;top:160.50px;width:90px;text-align:center;font-size:10px;line-height:10px;color:#858585;white-space:nowrap;letter-spacing:0.3px;">N/A</div>
<div style="position:absolute;left:650.00px;top:160.50px;width:90px;text-align:center;font-size:10px;line-height:10px;color:#2e2e2e;white-space:nowrap;letter-spacing:0.3px;">1.4</div>
<div style="position:absolute;left:721px;top:155px;width:64px;height:24px;overflow:hidden;">
<div style="position:absolute;left:-0.3px;top:5.00px;font-size:10px;line-height:10px;color:#2e2e2e;white-space:nowrap;letter-spacing:0.55px;">24, 00:33:31</div>
</div>
<div style="position:absolute;left:770.00px;top:162.99px;width:90px;text-align:center;font-size:10.6px;line-height:10.6px;color:#b9b9b9;white-space:nowrap;letter-spacing:-0.45px;">TURN ON</div>
<div style="position:absolute;left:848.6px;top:163.50px;font-size:10px;line-height:10px;color:#2e2e2e;white-space:nowrap;letter-spacing:0.3px;">True Lo</div>
<div style="position:absolute;left:-2.00px;top:184.50px;width:30px;text-align:center;font-size:10px;line-height:10px;color:#2e2e2e;white-space:nowrap;letter-spacing:0.25px;">6</div>
<div style="position:absolute;left:26.50px;top:184.50px;width:94px;text-align:center;font-size:10px;line-height:10px;color:#2e2e2e;white-space:nowrap;letter-spacing:0.38px;">d8803961ed86</div>
<div style="position:absolute;left:121.00px;top:187.19px;width:94px;text-align:center;font-size:10.6px;line-height:10.6px;color:#b9b9b9;white-space:nowrap;letter-spacing:-0.45px;">UPDATE</div>
<div style="position:absolute;left:232.50px;top:184.50px;width:94px;text-align:center;font-size:10px;line-height:10px;color:#2e2e2e;white-space:nowrap;letter-spacing:0.05px;">SE08</div>
<svg style="position:absolute;left:379px;top:184.60000000000002px" width="10" height="8" viewBox="0 0 10 8"><path d="M0.8 3.8 L3.6 6.6 L9.2 1" fill="none" stroke="#169c24" stroke-width="1.9"/></svg>
<div style="position:absolute;left:426.50px;top:184.50px;width:90px;text-align:center;font-size:10px;line-height:10px;color:#858585;white-space:nowrap;letter-spacing:0.3px;">N/A</div>
<div style="position:absolute;left:508.00px;top:184.50px;width:90px;text-align:center;font-size:10px;line-height:10px;color:#2e2e2e;white-space:nowrap;letter-spacing:0.3px;">1.024</div>
<div style="position:absolute;left:583.50px;top:184.50px;width:90px;text-align:center;font-size:10px;line-height:10px;color:#858585;white-space:nowrap;letter-spacing:0.3px;">N/A</div>
<div style="position:absolute;left:650.00px;top:184.50px;width:90px;text-align:center;font-size:10px;line-height:10px;color:#2e2e2e;white-space:nowrap;letter-spacing:0.3px;">1.4</div>
<div style="position:absolute;left:721px;top:179px;width:64px;height:24px;overflow:hidden;">
<div style="position:absolute;left:-0.3px;top:5.00px;font-size:10px;line-height:10px;color:#2e2e2e;white-space:nowrap;letter-spacing:0.55px;">24, 00:33:22</div>
</div>
<div style="position:absolute;left:770.00px;top:186.99px;width:90px;text-align:center;font-size:10.6px;line-height:10.6px;color:#b9b9b9;white-space:nowrap;letter-spacing:-0.45px;">TURN ON</div>
<div style="position:absolute;left:848.6px;top:187.50px;font-size:10px;line-height:10px;color:#2e2e2e;white-space:nowrap;letter-spacing:0.3px;">True Lo</div>
<div style="position:absolute;left:-2.00px;top:208.50px;width:30px;text-align:center;font-size:10px;line-height:10px;color:#2e2e2e;white-space:nowrap;letter-spacing:0.25px;">7</div>
<div style="position:absolute;left:26.50px;top:208.50px;width:94px;text-align:center;font-size:10px;line-height:10px;color:#2e2e2e;white-space:nowrap;letter-spacing:0.38px;">d8803962053e</div>
<div style="position:absolute;left:121.00px;top:211.19px;width:94px;text-align:center;font-size:10.6px;line-height:10.6px;color:#b9b9b9;white-space:nowrap;letter-spacing:-0.45px;">UPDATE</div>
<div style="position:absolute;left:232.50px;top:208.50px;width:94px;text-align:center;font-size:10px;line-height:10px;color:#2e2e2e;white-space:nowrap;letter-spacing:0.05px;">SE05</div>
<svg style="position:absolute;left:379px;top:208.60000000000002px" width="10" height="8" viewBox="0 0 10 8"><path d="M0.8 3.8 L3.6 6.6 L9.2 1" fill="none" stroke="#169c24" stroke-width="1.9"/></svg>
<div style="position:absolute;left:426.50px;top:208.50px;width:90px;text-align:center;font-size:10px;line-height:10px;color:#858585;white-space:nowrap;letter-spacing:0.3px;">N/A</div>
<div style="position:absolute;left:508.00px;top:208.50px;width:90px;text-align:center;font-size:10px;line-height:10px;color:#2e2e2e;white-space:nowrap;letter-spacing:0.3px;">1.024</div>
<div style="position:absolute;left:583.50px;top:208.50px;width:90px;text-align:center;font-size:10px;line-height:10px;color:#858585;white-space:nowrap;letter-spacing:0.3px;">N/A</div>
<div style="position:absolute;left:650.00px;top:208.50px;width:90px;text-align:center;font-size:10px;line-height:10px;color:#2e2e2e;white-space:nowrap;letter-spacing:0.3px;">1.4</div>
<div style="position:absolute;left:721px;top:203px;width:64px;height:24px;overflow:hidden;">
<div style="position:absolute;left:-0.3px;top:5.00px;font-size:10px;line-height:10px;color:#2e2e2e;white-space:nowrap;letter-spacing:0.55px;">24, 00:33:04</div>
</div>
<div style="position:absolute;left:770.00px;top:210.99px;width:90px;text-align:center;font-size:10.6px;line-height:10.6px;color:#b9b9b9;white-space:nowrap;letter-spacing:-0.45px;">TURN ON</div>
<div style="position:absolute;left:848.6px;top:211.50px;font-size:10px;line-height:10px;color:#2e2e2e;white-space:nowrap;letter-spacing:0.3px;">True Lo</div>
<div style="position:absolute;left:-2.00px;top:232.50px;width:30px;text-align:center;font-size:10px;line-height:10px;color:#2e2e2e;white-space:nowrap;letter-spacing:0.25px;">8</div>
<div style="position:absolute;left:26.50px;top:232.50px;width:94px;text-align:center;font-size:10px;line-height:10px;color:#2e2e2e;white-space:nowrap;letter-spacing:0.38px;">d8803962794e</div>
<div style="position:absolute;left:121.00px;top:235.19px;width:94px;text-align:center;font-size:10.6px;line-height:10.6px;color:#b9b9b9;white-space:nowrap;letter-spacing:-0.45px;">UPDATE</div>
<div style="position:absolute;left:232.50px;top:232.50px;width:94px;text-align:center;font-size:10px;line-height:10px;color:#2e2e2e;white-space:nowrap;letter-spacing:0.05px;">SE06</div>
<svg style="position:absolute;left:379px;top:232.60000000000002px" width="10" height="8" viewBox="0 0 10 8"><path d="M0.8 3.8 L3.6 6.6 L9.2 1" fill="none" stroke="#169c24" stroke-width="1.9"/></svg>
<div style="position:absolute;left:426.50px;top:232.50px;width:90px;text-align:center;font-size:10px;line-height:10px;color:#858585;white-space:nowrap;letter-spacing:0.3px;">N/A</div>
<div style="position:absolute;left:508.00px;top:232.50px;width:90px;text-align:center;font-size:10px;line-height:10px;color:#2e2e2e;white-space:nowrap;letter-spacing:0.3px;">1.024</div>
<div style="position:absolute;left:583.50px;top:232.50px;width:90px;text-align:center;font-size:10px;line-height:10px;color:#858585;white-space:nowrap;letter-spacing:0.3px;">N/A</div>
<div style="position:absolute;left:650.00px;top:232.50px;width:90px;text-align:center;font-size:10px;line-height:10px;color:#2e2e2e;white-space:nowrap;letter-spacing:0.3px;">1.4</div>
<div style="position:absolute;left:721px;top:227px;width:64px;height:24px;overflow:hidden;">
<div style="position:absolute;left:-0.3px;top:5.00px;font-size:10px;line-height:10px;color:#2e2e2e;white-space:nowrap;letter-spacing:0.55px;">24, 00:33:14</div>
</div>
<div style="position:absolute;left:770.00px;top:234.99px;width:90px;text-align:center;font-size:10.6px;line-height:10.6px;color:#b9b9b9;white-space:nowrap;letter-spacing:-0.45px;">TURN ON</div>
<div style="position:absolute;left:848.6px;top:235.50px;font-size:10px;line-height:10px;color:#2e2e2e;white-space:nowrap;letter-spacing:0.3px;">True Lo</div>
<div style="position:absolute;left:-2.00px;top:256.50px;width:30px;text-align:center;font-size:10px;line-height:10px;color:#2e2e2e;white-space:nowrap;letter-spacing:0.25px;">9</div>
<div style="position:absolute;left:26.50px;top:256.50px;width:94px;text-align:center;font-size:10px;line-height:10px;color:#2e2e2e;white-space:nowrap;letter-spacing:0.38px;">d880396230c4</div>
<div style="position:absolute;left:121.00px;top:259.19px;width:94px;text-align:center;font-size:10.6px;line-height:10.6px;color:#b9b9b9;white-space:nowrap;letter-spacing:-0.45px;">UPDATE</div>
<div style="position:absolute;left:232.50px;top:256.50px;width:94px;text-align:center;font-size:10px;line-height:10px;color:#2e2e2e;white-space:nowrap;letter-spacing:0.05px;">SE52</div>
<svg style="position:absolute;left:379px;top:256.6px" width="10" height="8" viewBox="0 0 10 8"><path d="M0.8 3.8 L3.6 6.6 L9.2 1" fill="none" stroke="#169c24" stroke-width="1.9"/></svg>
<div style="position:absolute;left:426.50px;top:256.50px;width:90px;text-align:center;font-size:10px;line-height:10px;color:#858585;white-space:nowrap;letter-spacing:0.3px;">N/A</div>
<div style="position:absolute;left:508.00px;top:256.50px;width:90px;text-align:center;font-size:10px;line-height:10px;color:#2e2e2e;white-space:nowrap;letter-spacing:0.3px;">1.024</div>
<div style="position:absolute;left:583.50px;top:256.50px;width:90px;text-align:center;font-size:10px;line-height:10px;color:#858585;white-space:nowrap;letter-spacing:0.3px;">N/A</div>
<div style="position:absolute;left:650.00px;top:256.50px;width:90px;text-align:center;font-size:10px;line-height:10px;color:#2e2e2e;white-space:nowrap;letter-spacing:0.3px;">1.4</div>
<div style="position:absolute;left:721px;top:251px;width:64px;height:24px;overflow:hidden;">
<div style="position:absolute;left:-0.3px;top:5.00px;font-size:10px;line-height:10px;color:#2e2e2e;white-space:nowrap;letter-spacing:0.55px;">24, 00:33:17</div>
</div>
<div style="position:absolute;left:770.00px;top:258.99px;width:90px;text-align:center;font-size:10.6px;line-height:10.6px;color:#b9b9b9;white-space:nowrap;letter-spacing:-0.45px;">TURN ON</div>
<div style="position:absolute;left:848.6px;top:259.50px;font-size:10px;line-height:10px;color:#2e2e2e;white-space:nowrap;letter-spacing:0.3px;">True Lo</div>
<div style="position:absolute;left:-2.00px;top:280.50px;width:30px;text-align:center;font-size:10px;line-height:10px;color:#2e2e2e;white-space:nowrap;letter-spacing:0.25px;">10</div>
<div style="position:absolute;left:26.50px;top:280.50px;width:94px;text-align:center;font-size:10px;line-height:10px;color:#2e2e2e;white-space:nowrap;letter-spacing:0.38px;">d88039623772</div>
<div style="position:absolute;left:121.00px;top:283.19px;width:94px;text-align:center;font-size:10.6px;line-height:10.6px;color:#b9b9b9;white-space:nowrap;letter-spacing:-0.45px;">UPDATE</div>
<div style="position:absolute;left:232.50px;top:280.50px;width:94px;text-align:center;font-size:10px;line-height:10px;color:#2e2e2e;white-space:nowrap;letter-spacing:0.05px;">SE38</div>
<svg style="position:absolute;left:379px;top:280.6px" width="10" height="8" viewBox="0 0 10 8"><path d="M0.8 3.8 L3.6 6.6 L9.2 1" fill="none" stroke="#169c24" stroke-width="1.9"/></svg>
<div style="position:absolute;left:426.50px;top:280.50px;width:90px;text-align:center;font-size:10px;line-height:10px;color:#858585;white-space:nowrap;letter-spacing:0.3px;">N/A</div>
<div style="position:absolute;left:508.00px;top:280.50px;width:90px;text-align:center;font-size:10px;line-height:10px;color:#2e2e2e;white-space:nowrap;letter-spacing:0.3px;">1.024</div>
<div style="position:absolute;left:583.50px;top:280.50px;width:90px;text-align:center;font-size:10px;line-height:10px;color:#858585;white-space:nowrap;letter-spacing:0.3px;">N/A</div>
<div style="position:absolute;left:650.00px;top:280.50px;width:90px;text-align:center;font-size:10px;line-height:10px;color:#2e2e2e;white-space:nowrap;letter-spacing:0.3px;">1.4</div>
<div style="position:absolute;left:721px;top:275px;width:64px;height:24px;overflow:hidden;">
<div style="position:absolute;left:-0.3px;top:5.00px;font-size:10px;line-height:10px;color:#2e2e2e;white-space:nowrap;letter-spacing:0.55px;">24, 00:33:18</div>
</div>
<div style="position:absolute;left:770.00px;top:282.99px;width:90px;text-align:center;font-size:10.6px;line-height:10.6px;color:#b9b9b9;white-space:nowrap;letter-spacing:-0.45px;">TURN ON</div>
<div style="position:absolute;left:848.6px;top:283.50px;font-size:10px;line-height:10px;color:#2e2e2e;white-space:nowrap;letter-spacing:0.3px;">True Lo</div>
<div style="position:absolute;left:-2.00px;top:304.50px;width:30px;text-align:center;font-size:10px;line-height:10px;color:#2e2e2e;white-space:nowrap;letter-spacing:0.25px;">11</div>
<div style="position:absolute;left:26.50px;top:304.50px;width:94px;text-align:center;font-size:10px;line-height:10px;color:#2e2e2e;white-space:nowrap;letter-spacing:0.38px;">d8803962934c</div>
<div style="position:absolute;left:121.00px;top:307.19px;width:94px;text-align:center;font-size:10.6px;line-height:10.6px;color:#b9b9b9;white-space:nowrap;letter-spacing:-0.45px;">UPDATE</div>
<div style="position:absolute;left:232.50px;top:304.50px;width:94px;text-align:center;font-size:10px;line-height:10px;color:#2e2e2e;white-space:nowrap;letter-spacing:0.05px;">SE42</div>
<svg style="position:absolute;left:379px;top:304.6px" width="10" height="8" viewBox="0 0 10 8"><path d="M0.8 3.8 L3.6 6.6 L9.2 1" fill="none" stroke="#169c24" stroke-width="1.9"/></svg>
<div style="position:absolute;left:426.50px;top:304.50px;width:90px;text-align:center;font-size:10px;line-height:10px;color:#858585;white-space:nowrap;letter-spacing:0.3px;">N/A</div>
<div style="position:absolute;left:508.00px;top:304.50px;width:90px;text-align:center;font-size:10px;line-height:10px;color:#2e2e2e;white-space:nowrap;letter-spacing:0.3px;">1.024</div>
<div style="position:absolute;left:583.50px;top:304.50px;width:90px;text-align:center;font-size:10px;line-height:10px;color:#858585;white-space:nowrap;letter-spacing:0.3px;">N/A</div>
<div style="position:absolute;left:650.00px;top:304.50px;width:90px;text-align:center;font-size:10px;line-height:10px;color:#2e2e2e;white-space:nowrap;letter-spacing:0.3px;">1.4</div>
<div style="position:absolute;left:721px;top:299px;width:64px;height:24px;overflow:hidden;">
<div style="position:absolute;left:-0.3px;top:5.00px;font-size:10px;line-height:10px;color:#2e2e2e;white-space:nowrap;letter-spacing:0.55px;">24, 00:33:15</div>
</div>
<div style="position:absolute;left:770.00px;top:306.99px;width:90px;text-align:center;font-size:10.6px;line-height:10.6px;color:#b9b9b9;white-space:nowrap;letter-spacing:-0.45px;">TURN ON</div>
<div style="position:absolute;left:848.6px;top:307.50px;font-size:10px;line-height:10px;color:#2e2e2e;white-space:nowrap;letter-spacing:0.3px;">True Lo</div>
<div style="position:absolute;left:-2.00px;top:328.50px;width:30px;text-align:center;font-size:10px;line-height:10px;color:#2e2e2e;white-space:nowrap;letter-spacing:0.25px;">12</div>
<div style="position:absolute;left:26.50px;top:328.50px;width:94px;text-align:center;font-size:10px;line-height:10px;color:#2e2e2e;white-space:nowrap;letter-spacing:0.38px;">d88039625905</div>
<div style="position:absolute;left:121.00px;top:331.19px;width:94px;text-align:center;font-size:10.6px;line-height:10.6px;color:#b9b9b9;white-space:nowrap;letter-spacing:-0.45px;">UPDATE</div>
<div style="position:absolute;left:232.50px;top:328.50px;width:94px;text-align:center;font-size:10px;line-height:10px;color:#2e2e2e;white-space:nowrap;letter-spacing:0.05px;">SE40</div>
<svg style="position:absolute;left:379px;top:328.6px" width="10" height="8" viewBox="0 0 10 8"><path d="M0.8 3.8 L3.6 6.6 L9.2 1" fill="none" stroke="#169c24" stroke-width="1.9"/></svg>
<div style="position:absolute;left:426.50px;top:328.50px;width:90px;text-align:center;font-size:10px;line-height:10px;color:#858585;white-space:nowrap;letter-spacing:0.3px;">N/A</div>
<div style="position:absolute;left:508.00px;top:328.50px;width:90px;text-align:center;font-size:10px;line-height:10px;color:#2e2e2e;white-space:nowrap;letter-spacing:0.3px;">1.024</div>
<div style="position:absolute;left:583.50px;top:328.50px;width:90px;text-align:center;font-size:10px;line-height:10px;color:#858585;white-space:nowrap;letter-spacing:0.3px;">N/A</div>
<div style="position:absolute;left:650.00px;top:328.50px;width:90px;text-align:center;font-size:10px;line-height:10px;color:#2e2e2e;white-space:nowrap;letter-spacing:0.3px;">1.4</div>
<div style="position:absolute;left:721px;top:323px;width:64px;height:24px;overflow:hidden;">
<div style="position:absolute;left:-0.3px;top:5.00px;font-size:10px;line-height:10px;color:#2e2e2e;white-space:nowrap;letter-spacing:0.55px;">24, 00:33:05</div>
</div>
<div style="position:absolute;left:770.00px;top:330.99px;width:90px;text-align:center;font-size:10.6px;line-height:10.6px;color:#b9b9b9;white-space:nowrap;letter-spacing:-0.45px;">TURN ON</div>
<div style="position:absolute;left:848.6px;top:331.50px;font-size:10px;line-height:10px;color:#2e2e2e;white-space:nowrap;letter-spacing:0.3px;">True Lo</div>
<div style="position:absolute;left:-2.00px;top:352.50px;width:30px;text-align:center;font-size:10px;line-height:10px;color:#2e2e2e;white-space:nowrap;letter-spacing:0.25px;">13</div>
<div style="position:absolute;left:26.50px;top:352.50px;width:94px;text-align:center;font-size:10px;line-height:10px;color:#2e2e2e;white-space:nowrap;letter-spacing:0.38px;">d88039628a85</div>
<div style="position:absolute;left:121.00px;top:355.19px;width:94px;text-align:center;font-size:10.6px;line-height:10.6px;color:#b9b9b9;white-space:nowrap;letter-spacing:-0.45px;">UPDATE</div>
<div style="position:absolute;left:232.50px;top:352.50px;width:94px;text-align:center;font-size:10px;line-height:10px;color:#2e2e2e;white-space:nowrap;letter-spacing:0.05px;">SE50</div>
<svg style="position:absolute;left:379px;top:352.6px" width="10" height="8" viewBox="0 0 10 8"><path d="M0.8 3.8 L3.6 6.6 L9.2 1" fill="none" stroke="#169c24" stroke-width="1.9"/></svg>
<div style="position:absolute;left:426.50px;top:352.50px;width:90px;text-align:center;font-size:10px;line-height:10px;color:#858585;white-space:nowrap;letter-spacing:0.3px;">N/A</div>
<div style="position:absolute;left:508.00px;top:352.50px;width:90px;text-align:center;font-size:10px;line-height:10px;color:#2e2e2e;white-space:nowrap;letter-spacing:0.3px;">1.024</div>
<div style="position:absolute;left:583.50px;top:352.50px;width:90px;text-align:center;font-size:10px;line-height:10px;color:#858585;white-space:nowrap;letter-spacing:0.3px;">N/A</div>
<div style="position:absolute;left:650.00px;top:352.50px;width:90px;text-align:center;font-size:10px;line-height:10px;color:#2e2e2e;white-space:nowrap;letter-spacing:0.3px;">1.4</div>
<div style="position:absolute;left:721px;top:347px;width:64px;height:24px;overflow:hidden;">
<div style="position:absolute;left:-0.3px;top:5.00px;font-size:10px;line-height:10px;color:#2e2e2e;white-space:nowrap;letter-spacing:0.55px;">24, 00:33:16</div>
</div>
<div style="position:absolute;left:770.00px;top:354.99px;width:90px;text-align:center;font-size:10.6px;line-height:10.6px;color:#b9b9b9;white-space:nowrap;letter-spacing:-0.45px;">TURN ON</div>
<div style="position:absolute;left:848.6px;top:355.50px;font-size:10px;line-height:10px;color:#2e2e2e;white-space:nowrap;letter-spacing:0.3px;">True Lo</div>
<div style="position:absolute;left:-2.00px;top:376.50px;width:30px;text-align:center;font-size:10px;line-height:10px;color:#2e2e2e;white-space:nowrap;letter-spacing:0.25px;">14</div>
<div style="position:absolute;left:26.50px;top:376.50px;width:94px;text-align:center;font-size:10px;line-height:10px;color:#2e2e2e;white-space:nowrap;letter-spacing:0.38px;">d880396230e2</div>
<div style="position:absolute;left:121.00px;top:379.19px;width:94px;text-align:center;font-size:10.6px;line-height:10.6px;color:#b9b9b9;white-space:nowrap;letter-spacing:-0.45px;">UPDATE</div>
<div style="position:absolute;left:232.50px;top:376.50px;width:94px;text-align:center;font-size:10px;line-height:10px;color:#2e2e2e;white-space:nowrap;letter-spacing:0.05px;">SE27</div>
<svg style="position:absolute;left:379px;top:376.6px" width="10" height="8" viewBox="0 0 10 8"><path d="M0.8 3.8 L3.6 6.6 L9.2 1" fill="none" stroke="#169c24" stroke-width="1.9"/></svg>
<div style="position:absolute;left:426.50px;top:376.50px;width:90px;text-align:center;font-size:10px;line-height:10px;color:#858585;white-space:nowrap;letter-spacing:0.3px;">N/A</div>
<div style="position:absolute;left:508.00px;top:376.50px;width:90px;text-align:center;font-size:10px;line-height:10px;color:#2e2e2e;white-space:nowrap;letter-spacing:0.3px;">1.024</div>
<div style="position:absolute;left:583.50px;top:376.50px;width:90px;text-align:center;font-size:10px;line-height:10px;color:#858585;white-space:nowrap;letter-spacing:0.3px;">N/A</div>
<div style="position:absolute;left:650.00px;top:376.50px;width:90px;text-align:center;font-size:10px;line-height:10px;color:#2e2e2e;white-space:nowrap;letter-spacing:0.3px;">1.4</div>
<div style="position:absolute;left:721px;top:371px;width:64px;height:24px;overflow:hidden;">
<div style="position:absolute;left:-0.3px;top:5.00px;font-size:10px;line-height:10px;color:#2e2e2e;white-space:nowrap;letter-spacing:0.55px;">24, 00:33:13</div>
</div>
<div style="position:absolute;left:770.00px;top:378.99px;width:90px;text-align:center;font-size:10.6px;line-height:10.6px;color:#b9b9b9;white-space:nowrap;letter-spacing:-0.45px;">TURN ON</div>
<div style="position:absolute;left:848.6px;top:379.50px;font-size:10px;line-height:10px;color:#2e2e2e;white-space:nowrap;letter-spacing:0.3px;">True Lo</div>
</div>
<div style="position:absolute;left:949px;top:263px;width:15px;height:381px;background:#f0f0f0;"></div>
<svg style="position:absolute;left:952px;top:267px" width="9" height="6"><path d="M0.5 5.5 L4.5 1 L8.5 5.5 Z" fill="#a0a0a0"/></svg>
<div style="position:absolute;left:950px;top:277px;width:11px;height:185px;background:#f0f0f0;border:1px solid #c8c8c8;border-radius:2px;"></div>
<div style="position:absolute;left:899.5px;top:578px;width:48px;height:48px;border-radius:50%;background:#0a64c9;box-shadow:0 2px 4px rgba(0,0,0,0.3);"></div>
<svg style="position:absolute;left:912.5px;top:591px" width="21" height="21" viewBox="0 0 512 512">
<path fill="#fff" d="M370.72 133.28C339.458 104.008 298.888 87.962 255.848 88c-77.458.068-144.328 53.178-162.791 126.85-1.344 5.363-6.122 9.15-11.651 9.15H24.103c-7.498 0-13.194-6.807-11.807-14.176C33.933 94.924 134.813 8 256 8c66.448 0 126.791 26.136 171.315 68.685L463.03 40.97C478.149 25.851 504 36.559 504 57.941V192c0 13.255-10.745 24-24 24H345.941c-21.382 0-32.090-25.851-16.971-40.971l41.750-41.749zM32 296h134.059c21.382 0 32.090 25.851 16.971 40.971l-41.750 41.750c31.262 29.273 71.835 45.319 114.876 45.280 77.418-.070 144.315-53.144 162.787-126.849 1.344-5.363 6.122-9.150 11.651-9.150h57.304c7.498 0 13.194 6.807 11.807 14.176C478.067 417.076 377.187 504 256 504c-66.448 0-126.791-26.136-171.315-68.685L48.970 471.030C33.851 486.149 8 475.441 8 454.059V320c0-13.255 10.745-24 24-24z"/>
</svg></body></html>
